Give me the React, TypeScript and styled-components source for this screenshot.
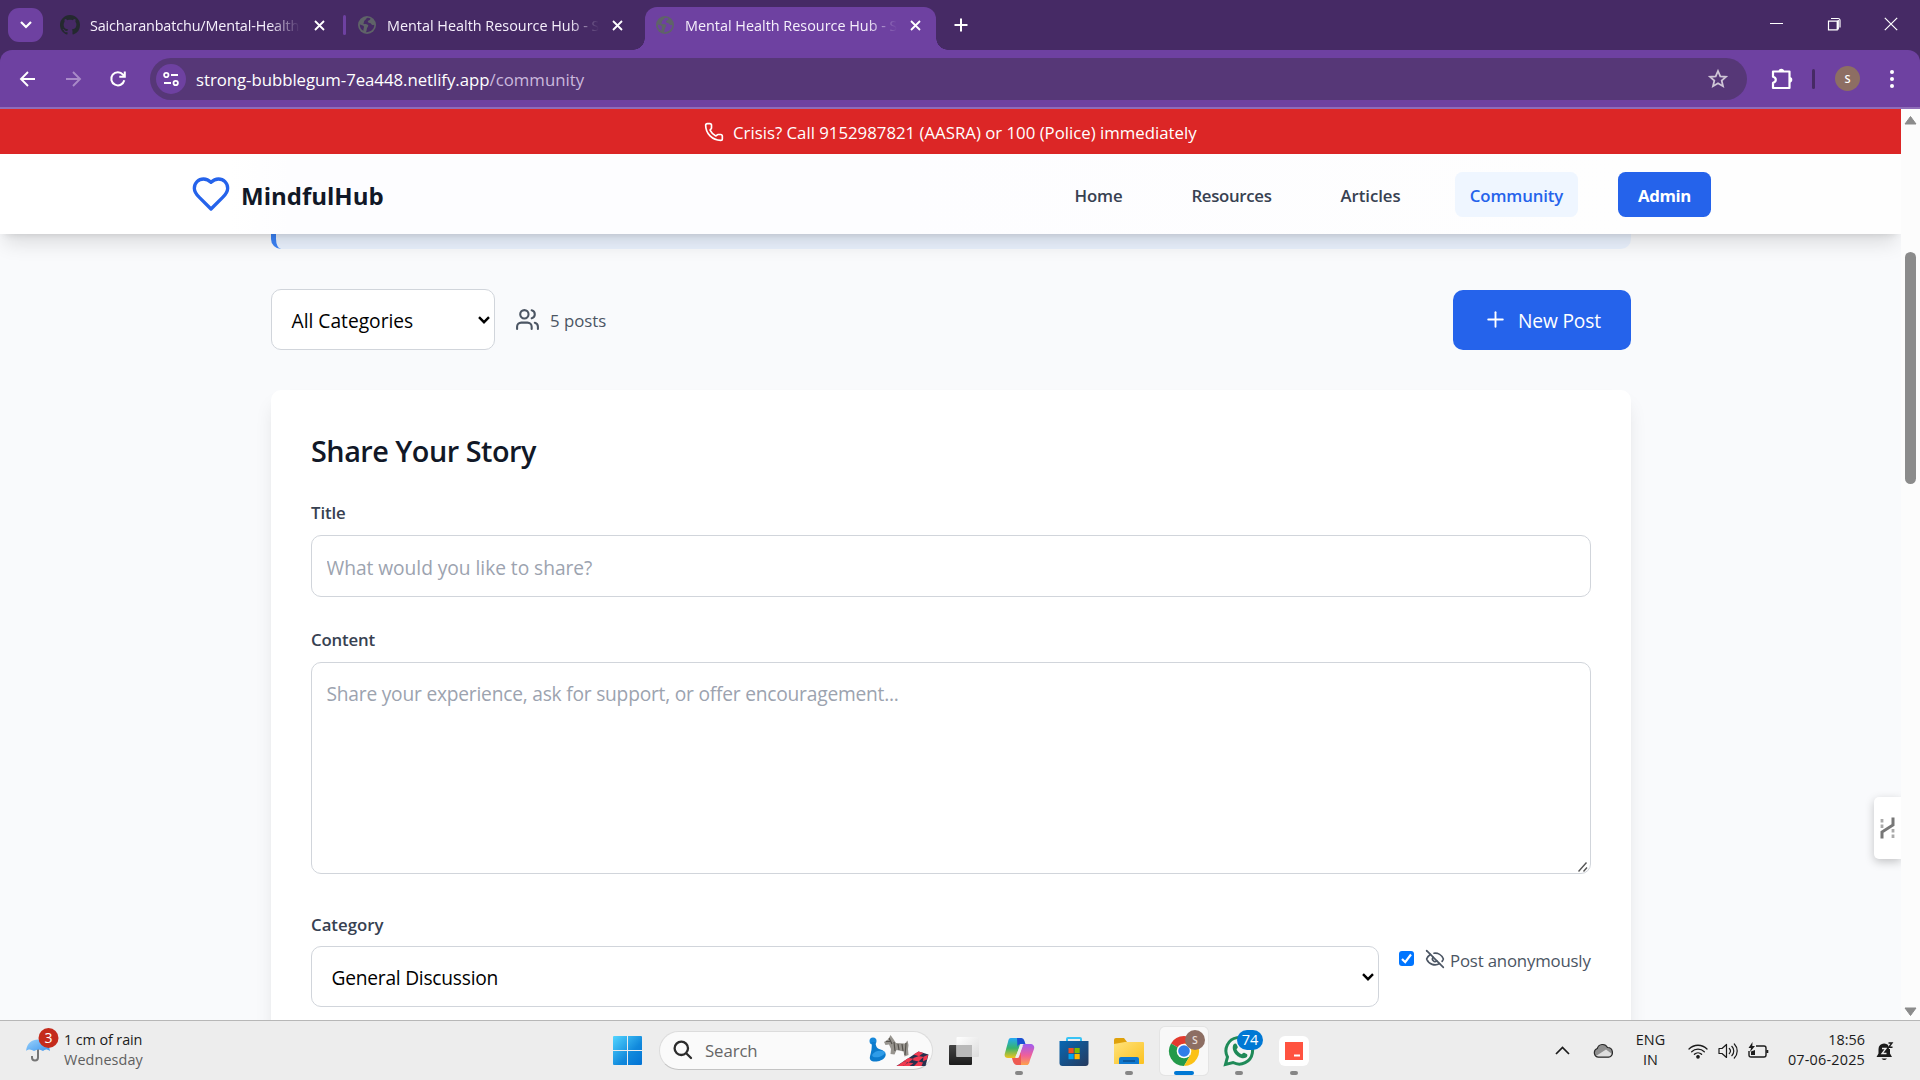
import React from 'react';
import styled, { createGlobalStyle } from 'styled-components';
import { EyeOff, Phone, Plus, Users } from 'lucide-react';

const GlobalStyle = createGlobalStyle`
  *, *::before, *::after { box-sizing: border-box; }
  html, body { margin: 0; overflow: hidden; }
  body { font-family: "Open Sans", "Noto Sans", sans-serif; background: #f9fafc; }
  svg { display: block; flex: none; }
  input, textarea, button { font-family: inherit; }
`;

const Screen = styled.div`
  width: 1920px;
  height: 1080px;
  display: flex;
  flex-direction: column;
  overflow: hidden;
`;

const Text = styled.span<{ $size: number; $ls?: number; $weight?: number; $color?: string; $drop?: number }>`
  display: block;
  flex: none;
  padding-top: ${(p) => p.$drop ?? 3.2}px;
  white-space: pre;
  line-height: 1.4;
  font-size: ${(p) => p.$size}px;
  letter-spacing: ${(p) => p.$ls ?? 0}px;
  font-weight: ${(p) => p.$weight ?? 400};
  color: ${(p) => p.$color ?? 'inherit'};
`;

/* ---------- browser chrome ---------- */

const TabStrip = styled.div`
  height: 50px;
  flex: none;
  display: flex;
  align-items: flex-start;
  padding: 0 0 0 8px;
  background: #462a65;
  color: #f5effb;
`;

const TabSearch = styled.button`
  width: 35px;
  height: 34px;
  margin: 8px 6px 0 0;
  padding: 0;
  border: 0;
  border-radius: 11px;
  background: #6e41a1;
  display: grid;
  place-items: center;
`;

const Tab = styled.div<{ $width: number; $left: number; $gap: number; $active?: boolean }>`
  position: relative;
  width: ${(p) => p.$width}px;
  height: ${(p) => (p.$active ? 43 : 50)}px;
  margin-top: ${(p) => (p.$active ? 7 : 0)}px;
  padding: ${(p) => (p.$active ? '0 0 7px' : '0')};
  padding-left: ${(p) => p.$left}px;
  display: flex;
  align-items: center;
  border-radius: 12px 12px 0 0;
  background: ${(p) => (p.$active ? '#6e41a1' : 'transparent')};

  > svg:first-child { margin-right: ${(p) => p.$gap}px; }

  &::before, &::after {
    content: '';
    display: ${(p) => (p.$active ? 'block' : 'none')};
    position: absolute;
    bottom: 0;
    width: 12px;
    height: 12px;
  }
  &::before { left: -12px; background: radial-gradient(circle at 0 0, transparent 11.5px, #6e41a1 12px); }
  &::after { right: -12px; background: radial-gradient(circle at 100% 0, transparent 11.5px, #6e41a1 12px); }
`;

const TabTitle = styled.div<{ $width: number }>`
  width: ${(p) => p.$width}px;
  overflow: hidden;
  mask-image: linear-gradient(90deg, #000 calc(100% - 30px), transparent);
`;

const TabClose = styled.div<{ $left: number }>`
  margin-left: ${(p) => p.$left}px;
`;

const TabDivider = styled.i`
  width: 3px;
  height: 20px;
  margin-top: 15px;
  border-radius: 2px;
  background: #6e41a1;
`;

const NewTab = styled.div`
  margin: 18px 0 0 18px;
`;

const WindowControls = styled.div`
  margin: 17px 22px 0 auto;
  display: flex;
  gap: 43px;
`;

const ToolbarBack = styled.div`
  background: #462a65;
  flex: none;
`;

const Toolbar = styled.div`
  height: 59px;
  border-bottom: 2px solid #8f6cb8;
  border-radius: 12px 12px 0 0;
  background: #6e41a1;
  display: flex;
  align-items: center;
  padding-left: 18px;
  color: #fff;
`;

const NavIcons = styled.div`
  display: flex;
  gap: 25px;
  width: 132px;
`;

const Omnibox = styled.div`
  width: 1597px;
  height: 42px;
  border-radius: 21px;
  background: #563777;
  display: flex;
  align-items: center;
  padding: 0 18px 0 6px;
`;

const SiteInfo = styled.div`
  width: 30px;
  height: 30px;
  margin-right: 10px;
  border-radius: 50%;
  background: #6e41a1;
  display: grid;
  place-items: center;
`;

const StarSlot = styled.div`
  margin-left: auto;
`;

const ToolbarEnd = styled.div`
  display: flex;
  align-items: center;
  padding-left: 22px;
`;

const ToolbarDivider = styled.i`
  width: 3px;
  height: 20px;
  margin: 0 20px 0 18px;
  border-radius: 2px;
  background: #462a65;
`;

const ProfileAvatar = styled.div`
  width: 25px;
  height: 25px;
  margin-right: 26px;
  border-radius: 50%;
  background: #8d6e63;
  display: grid;
  place-items: center;
  font: 600 11px "Open Sans", sans-serif;
`;

/* ---------- web page ---------- */

const Viewport = styled.div`
  height: 911px;
  flex: none;
  display: flex;
  overflow: hidden;
`;

const Page = styled.div`
  position: relative;
  width: 1901px;
  height: 911px;
  overflow: hidden;
  background: #f9fafc;
`;

const CrisisBanner = styled.div`
  height: 45px;
  background: #dc2626;
  color: #fff;
  display: flex;
  align-items: center;
  padding-left: 704px;
  gap: 9px;
`;

const Header = styled.header`
  position: relative;
  z-index: 2;
  height: 80px;
  padding: 0 190px 0 191px;
  background: linear-gradient(90deg, #fff 230px, #fdfdff 290px, #fdfdff 900px, #fefefe 1640px, #fefefe);
  box-shadow: 0 12.5px 18.75px -3.75px rgba(0, 0, 0, 0.12), 0 5px 7.5px -5px rgba(0, 0, 0, 0.12);
  display: flex;
  align-items: center;
  justify-content: space-between;
`;

const Brand = styled.div`
  display: flex;
  align-items: center;
  gap: 10px;
`;

const Nav = styled.nav`
  display: flex;
  gap: 40px;
`;

const NavItem = styled.a<{ $width: number; $variant?: 'active' | 'solid' }>`
  width: ${(p) => p.$width}px;
  height: 45px;
  border-radius: 7.5px;
  display: grid;
  place-items: center;
  color: ${(p) => (p.$variant === 'active' ? '#2563eb' : p.$variant === 'solid' ? '#fff' : '#374151')};
  background: ${(p) => (p.$variant === 'active' ? '#eff6ff' : p.$variant === 'solid' ? '#2563eb' : 'transparent')};
`;

const Content = styled.main`
  width: 1360px;
  margin-left: 271px;
`;

const GuidelinesEdge = styled.div`
  height: 15px;
  border-left: 5px solid #3b82f6;
  border-radius: 0 0 10px 10px;
  background: #eaf2fe;
`;

const FilterRow = styled.div`
  display: flex;
  align-items: center;
  justify-content: space-between;
  height: 61px;
  margin: 40px 0;
`;

const FilterGroup = styled.div`
  display: flex;
  align-items: center;
  gap: 20px;
`;

const SelectBox = styled.div<{ $width: number }>`
  width: ${(p) => p.$width}px;
  height: 61px;
  padding: 0 4px 0 19.5px;
  border: 1px solid #d1d5db;
  border-radius: 10px;
  background: #fff;
  color: #000;
  display: flex;
  align-items: center;
  justify-content: space-between;
`;

const PostCount = styled.div`
  display: flex;
  align-items: center;
  gap: 10px;
  color: #4b5563;
`;

const NewPost = styled.button`
  width: 178px;
  height: 60px;
  padding: 0 0 0 30px;
  border: 0;
  border-radius: 10px;
  background: #2563eb;
  color: #fff;
  display: flex;
  align-items: center;
  gap: 10px;
`;

const Card = styled.section`
  height: 700px;
  padding: 40px;
  border-radius: 10px;
  background: #fff;
  box-shadow: 0 12.5px 18.75px -3.75px rgba(0, 0, 0, 0.1), 0 5px 7.5px -5px rgba(0, 0, 0, 0.1);
`;

const CardTitle = styled.div`
  height: 40px;
  margin-bottom: 30px;
  display: flex;
  align-items: center;
  color: #111827;
`;

const Label = styled.div`
  height: 25px;
  margin-bottom: 10px;
  display: flex;
  align-items: center;
  color: #374151;
`;

const TitleInput = styled.input`
  display: block;
  width: 1280px;
  height: 62px;
  margin-bottom: 30px;
  padding: 2px 14.5px 0;
  border: 1px solid #d1d5db;
  border-radius: 10px;
  outline: 0;
  font-size: 19.2px;
  &::placeholder { color: #9ca3af; opacity: 1; letter-spacing: -0.04px; }
`;

const ContentField = styled.div`
  position: relative;
  height: 212px;
  margin-bottom: 37px;
`;

const ContentArea = styled.textarea`
  display: block;
  width: 1280px;
  height: 212px;
  padding: 15.5px 14.5px;
  border: 1px solid #d1d5db;
  border-radius: 10px;
  outline: 0;
  resize: none;
  font-size: 19.2px;
  line-height: 30px;
  &::placeholder { color: #9ca3af; opacity: 1; letter-spacing: -0.22px; }
`;

const ResizeGrip = styled.svg`
  position: absolute;
  right: 3px;
  bottom: 2px;
`;

const CategoryRow = styled.div`
  display: flex;
  justify-content: space-between;
  align-items: flex-start;
`;

const Anonymous = styled.div`
  width: 192px;
  height: 26px;
  margin-top: 35px;
  display: flex;
  align-items: center;
  color: #4b5563;
`;

const Check = styled.div`
  width: 15px;
  height: 15px;
  margin: -1px 11px 0 0;
  border-radius: 3px;
  background: #0075ff;
  display: grid;
  place-items: center;
`;

const AnonIcon = styled.div`
  margin: 0 5px 0 0;
`;

const SideWidget = styled.div`
  position: absolute;
  right: 0;
  top: 688px;
  width: 27px;
  height: 62px;
  border-radius: 5px 0 0 5px;
  background: #fff;
  box-shadow: 0 3px 10px rgba(0, 0, 0, 0.22);
  display: grid;
  place-items: center;
`;

const Scrollbar = styled.div`
  width: 19px;
  background: #fcfcfc;
  display: flex;
  flex-direction: column;
  align-items: center;
  padding: 6px 0 3px;
`;

const Thumb = styled.div`
  width: 11px;
  height: 232px;
  margin: 127px 0 auto;
  border-radius: 6px;
  background: #8b8b8b;
`;

/* ---------- taskbar ---------- */

const Taskbar = styled.div`
  height: 60px;
  flex: none;
  border-top: 1px solid #b7b7b7;
  background: #ededed;
  display: flex;
  align-items: center;
  color: #1b1b1b;
`;

const Weather = styled.div`
  width: 613px;
  height: 59px;
  padding-left: 25px;
  display: flex;
`;

const WeatherIcon = styled.div`
  width: 39px;
  padding-top: 5px;
`;

const TwoLine = styled.div<{ $align?: string }>`
  height: 59px;
  padding-top: 9px;
  display: flex;
  flex-direction: column;
  align-items: ${(p) => p.$align ?? 'flex-start'};
  > span { height: 20px; line-height: 20px; padding: 0; }
`;

const SearchPill = styled.div`
  width: 274px;
  height: 39px;
  margin: 0 7px 1px 17px;
  padding-left: 13px;
  border: 1px solid #dcdcdc;
  border-bottom-color: #c4c4c4;
  border-radius: 20px;
  background: #fafafa;
  display: flex;
  align-items: center;
`;

const SearchText = styled.div`
  width: 176px;
  padding-left: 12px;
`;

const AppTile = styled.div<{ $active?: boolean }>`
  width: 48px;
  height: 48px;
  margin-right: 7px;
  border-radius: 5px;
  background: ${(p) => (p.$active ? '#f8f8f8' : 'transparent')};
  box-shadow: ${(p) => (p.$active ? '0 0 0 1px #e4e4e4' : 'none')};
  display: flex;
  flex-direction: column;
  align-items: center;
  padding-top: 4px;
`;

const RunMark = styled.i<{ $active?: boolean }>`
  width: ${(p) => (p.$active ? 20 : 8)}px;
  height: 4px;
  border-radius: 2px;
  background: ${(p) => (p.$active ? '#0078d4' : '#868686')};
`;

const Tray = styled.div`
  margin-left: auto;
  width: 365px;
  height: 59px;
  display: flex;
  align-items: center;
`;

const TraySlot = styled.div<{ $width: number; $after?: number }>`
  width: ${(p) => p.$width}px;
  margin-right: ${(p) => p.$after ?? 0}px;
  flex: none;
`;

/* ---------- drawings ---------- */

const Stroke = ({ w, h, d, s = 2, c = '#fff', box, round }: { w: number; h: number; d: string; s?: number; c?: string; box?: string; round?: boolean }) => (
  <svg width={w} height={h} viewBox={box ?? `0 0 ${w} ${h}`} fill="none" stroke={c} strokeWidth={s} strokeLinecap={round ? 'round' : 'butt'} strokeLinejoin={round ? 'round' : 'miter'}>
    <path d={d} />
  </svg>
);

const GithubMark = () => (
  <svg width="20" height="20" viewBox="0 0 16 16" fill="#24292f">
    <path d="M8 0C3.58 0 0 3.58 0 8c0 3.54 2.29 6.53 5.47 7.59.4.07.55-.17.55-.38 0-.19-.01-.82-.01-1.49-2.01.37-2.53-.49-2.69-.94-.09-.23-.48-.94-.82-1.13-.28-.15-.68-.52-.01-.53.63-.01 1.08.58 1.23.82.72 1.21 1.87.87 2.33.66.07-.52.28-.87.51-1.07-1.78-.2-3.64-.89-3.64-3.95 0-.87.31-1.59.82-2.15-.08-.2-.36-1.02.08-2.12 0 0 .67-.21 2.2.82.64-.18 1.32-.27 2-.27s1.36.09 2 .27c1.53-1.04 2.2-.82 2.2-.82.44 1.1.16 1.92.08 2.12.51.56.82 1.27.82 2.15 0 3.07-1.87 3.75-3.65 3.95.29.25.54.73.54 1.48 0 1.07-.01 1.93-.01 2.2 0 .21.15.46.55.38A8.01 8.01 0 0 0 16 8c0-4.42-3.58-8-8-8z" />
  </svg>
);

const GlobeMark = ({ bg }: { bg: string }) => (
  <svg width="18" height="18" viewBox="0 0 18 18">
    <circle cx="9" cy="9" r="9" fill="#5f6368" />
    <path d="M9.500 1.800C8 2.200 8.200 4 6.600 4.400 5.600 4.900 6.500 6.600 5.200 7.200 6.500 8.800 9.300 7.500 10.200 9.200 10.800 10.500 9 11.100 8.900 12.600 8.700 14 8.500 15 8 16.200 13 16.200 16.400 13 16.300 8.800 14.800 9.500 13.800 8.800 13 7.800 12 6.600 9.600 7.200 9.800 5.600 10 4.400 12.300 4.600 12.500 2.600 11.600 2 10.500 1.700 9.500 1.800Z" fill={bg} />
    <path d="M1.800 8.500C3 9 5 9.300 5.800 10.200 6.500 11.300 5.200 12.200 5.400 14.800 3 13.500 1.700 11.300 1.800 8.500Z" fill={bg} />
  </svg>
);

const CloseMark = () => <Stroke w={11} h={11} s={1.8} d="M1 1l9 9M10 1l-9 9" />;

const Caret = () => <Stroke w={12} h={8} s={2.4} c="#000" d="M1 1.200l5 5 5-5" />;

const HeartMark = () => (
  <Stroke w={40} h={40} box="0 0 24 24" c="#2563eb" round
    d="M19 14c1.49-1.46 3-3.21 3-5.5A5.5 5.5 0 0 0 16.5 3c-1.76 0-3 .5-4.5 2-1.5-1.5-2.74-2-4.5-2A5.5 5.5 0 0 0 2 8.5c0 2.3 1.5 4.05 3 5.5l7 7Z" />
);

const Umbrella = () => (
  <svg width="36" height="42" viewBox="0 0 36 42">
    <defs><linearGradient id="um" x1="0" y1="0" x2="1" y2="1"><stop offset="0" stopColor="#9bd2fb" /><stop offset="1" stopColor="#3f97ee" /></linearGradient></defs>
    <path d="M13 20V31.500a3 3 0 0 1-6 0V30" fill="none" stroke="#757575" strokeWidth="2" />
    <path d="M1 25C2 17 7 13.500 13 13.500S24 17 25 25C22 23 20 23 18 25 15 23 12 23 9 25 6 23 3 23 1 25Z" fill="url(#um)" />
    <circle cx="23.500" cy="12" r="10" fill="#c42b1c" />
    <text x="23.500" y="17" textAnchor="middle" fontFamily="Open Sans" fontSize="14" fill="#fff">3</text>
  </svg>
);

const WindowsLogo = () => (
  <svg width="29" height="29" viewBox="0 0 29 29">
    <defs><linearGradient id="wl" x1="0" y1="0" x2="29" y2="29" gradientUnits="userSpaceOnUse"><stop stopColor="#53d5ff" /><stop offset=".6" stopColor="#1189dc" /><stop offset="1" stopColor="#0272d4" /></linearGradient></defs>
    <path d="M1 0h13v14H0V1q0-1 1-1zM15 0h13q1 0 1 1v13H15zM0 15h14v14H1q-1 0-1-1zM15 15h14v13q0 1-1 1H15z" fill="url(#wl)" />
  </svg>
);

const BoardGame = () => (
  <svg width="60" height="34" viewBox="0 0 60 34">
    <circle cx="4" cy="8" r="3.500" fill="#1687d9" />
    <path d="M2.500 9h4c.3 4 1 6.500 5 7.500 4 1 6.500 4 4.500 7.500-2.500 4.500-12 6-14.500 3-2.500-3 2.500-8 1-18z" fill="#0c7bcd" />
    <ellipse cx="9.500" cy="21" rx="6.500" ry="3" fill="#2f9ce8" transform="rotate(-15 9.500 21)" />
    <path d="M15 9l4.500-3L21.500 2l2.500 3.500 3 4.500 9 .5 2.500-3 1 4.500-.5 4 .5 6-4 1.500-1-5-7-1.500-2 4.500-4-.5 .5-5-2-4.500-3.500.5z" fill="#97948e" />
    <path d="M20 5l3 6M25 9l1 9M29 11l1 6M33 11l1 7M37 10l-1 12M17 8.500h4" stroke="#55524d" strokeWidth="1.200" />
    <path d="M49.500 18.500L59.500 21.500 56.500 33H27.500z" fill="#27304e" />
    <path d="M49.500 18.500l4.800 1.500-4.300 3.200-5.500-1.700zM54.500 23.800l4.500-2-1 4.700-4 1.700zM44.500 25l5.500-2 4.500 1-5 4.500-5.500-1.200zM39.500 25l5 .8-5 3.700-5-1.200zM49.500 28.500l4.500 1-1.500 3.500h-7.500zM39.500 29.500l5 .8-4 2.700h-6.500zM34.500 28.500l-5 3.500-2 1h7l4-3.500z" fill="#f23a50" />
  </svg>
);

const TaskView = () => (
  <svg width="32" height="40" viewBox="0 0 32 40">
    <defs>
      <linearGradient id="tv" x1="0" y1="0" x2="0" y2="1"><stop stopColor="#444" /><stop offset="1" stopColor="#1c1c1c" /></linearGradient>
      <linearGradient id="tw" x1="0" y1="0" x2="1" y2="1"><stop stopColor="#fff" /><stop offset="1" stopColor="#dcdcdc" /></linearGradient>
    </defs>
    <rect x="1" y="14" width="23" height="20" rx="1" fill="url(#tv)" />
    <rect x="8.500" y="6" width="22.500" height="20" rx="1" fill="url(#tw)" />
    <path d="M8.500 14H24V26H8.500z" fill="#b9b9b9" />
  </svg>
);

const Copilot = () => (
  <svg width="32" height="40" viewBox="0 0 32 40">
    <defs>
      <linearGradient id="cp1" x1="0" y1="0" x2="0" y2="1"><stop stopColor="#24a9f5" /><stop offset=".5" stopColor="#37b46c" /><stop offset="1" stopColor="#f5c51c" /></linearGradient>
      <linearGradient id="cp2" x1="0" y1="0" x2="0" y2="1"><stop stopColor="#a05cf0" /><stop offset=".55" stopColor="#f0609a" /><stop offset="1" stopColor="#fda24a" /></linearGradient>
    </defs>
    <path d="M8 7h11L13 26c-1 2-1 1-4 1H5c-3 0-4-2-3-5l3-11c.6-2.500 1-4 3-4z" fill="url(#cp1)" />
    <path d="M14 7h4c3 0 3.500 3 4.500 6H18c-2 0-3 1-3.500 3z" fill="#1a4fd2" />
    <path d="M24 34H13l6-18c1-3 1-3 4-3h4c3 0 5 2 4 5l-4 11c-.6 2.500-1 5-3 5z" fill="url(#cp2)" />
    <path d="M18 34h-4c-3 0-4-3-5-7h5c3 0 3-3 4-6z" fill="#ee5a52" />
    <path d="M17.500 14.500h2.500l-4.500 12h-3.500z" fill="#ededed" />
  </svg>
);

const Store = () => (
  <svg width="32" height="40" viewBox="0 0 32 40">
    <defs><linearGradient id="st" x1="0" y1="0" x2="1" y2="1"><stop stopColor="#0668b4" /><stop offset="1" stopColor="#263a5e" /></linearGradient></defs>
    <path d="M9 12V8q0-1 1-1h12q1 0 1 1v4" fill="none" stroke="#38c3f5" strokeWidth="2" />
    <path d="M1.500 10h29v22q0 3-3 3h-23q-3 0-3-3z" fill="url(#st)" />
    <path d="M10.500 17h5.200v5.200h-5.200z" fill="#f25022" /><path d="M16.500 17h5.200v5.200h-5.200z" fill="#7fba00" />
    <path d="M10.500 23h5.200v5.200h-5.200z" fill="#00a4ef" /><path d="M16.500 23h5.200v5.200h-5.200z" fill="#ffb900" />
  </svg>
);

const Explorer = () => (
  <svg width="32" height="40" viewBox="0 0 32 40">
    <defs><linearGradient id="ex" x1="0" y1="0" x2="1" y2="1"><stop stopColor="#ffe27a" /><stop offset="1" stopColor="#fbc11f" /></linearGradient></defs>
    <path d="M1 9q0-2 2-2h8l3 4v3H1z" fill="#dfa10b" />
    <path d="M1 13l11-2h18q1 0 1 1v20q0 1-1 1H1z" fill="url(#ex)" />
    <path d="M6 33v-5q0-2 2-2h16q2 0 2 2v5z" fill="#0e78cf" />
    <path d="M10 30h12" stroke="#0a4f91" strokeWidth="1.500" />
  </svg>
);

const Chrome = () => (
  <svg width="40" height="40" viewBox="0 0 40 40" overflow="visible">
    <path d="M20 20L7 12.500A15 15 0 0 1 33 12.500z" fill="#e33b2e" />
    <path d="M20 20L7 12.500A15 15 0 0 0 20 35L26.500 24z" fill="#249a4a" />
    <path d="M20 35A15 15 0 0 0 33 12.500H20l6.500 11.200z" fill="#fbc116" />
    <circle cx="20" cy="20" r="7.300" fill="#fff" /><circle cx="20" cy="20" r="5.800" fill="#2f7de9" />
    <circle cx="31" cy="9" r="10" fill="#8d6e63" />
    <text x="31" y="12.800" textAnchor="middle" fontFamily="Open Sans" fontWeight="600" fontSize="10.500" fill="#e6dcd8">S</text>
  </svg>
);

const WhatsApp = () => (
  <svg width="32" height="40" viewBox="0 0 32 40" overflow="visible">
    <path d="M2.500 33.500l2-7.500A13.300 13.300 0 1 1 10 31.500z" fill="#f4f4f4" stroke="#1f8a58" strokeWidth="3" />
    <path d="M10.500 13.500c1-1.500 2.500-1.500 3.200 0l1 2.300c.3.800-.3 1.600-1.200 2.500 1.200 2.500 2.800 4 5.200 5 1-1 1.700-1.900 2.500-1.500l2.500 1.200c1.300.8.700 2.500-.5 3.500C16.500 30 7 20 10.500 13.500z" fill="#1f8a58" />
    <rect x="14" y="-1" width="26" height="20" rx="10" fill="#0078d4" />
    <text x="27" y="14.300" textAnchor="middle" fontFamily="Open Sans" fontSize="14.500" fill="#fff">74</text>
  </svg>
);

const RedApp = () => (
  <svg width="32" height="40" viewBox="0 0 32 40">
    <rect x="1" y="5" width="30" height="30" rx="6" fill="#fff" />
    <path d="M7 11h18v18H7z" fill="#ff5340" /><path d="M16 24.500h6" stroke="#fff" strokeWidth="2" />
  </svg>
);

const Cloud = () => (
  <svg width="20" height="16" viewBox="0 0 20 16">
    <path d="M5.500 14.200A4.500 4.500 0 0 1 4.300 5.500 5.500 5.500 0 0 1 14.500 4.500 4.900 4.900 0 0 1 15.500 14.200z" fill="#8f8f8f" />
    <path d="M3 13l10-6.500 6 4.500-2 3H5z" fill="#dedede" />
    <path d="M5.500 14.200A4.500 4.500 0 0 1 4.300 5.500 5.500 5.500 0 0 1 14.500 4.500 4.900 4.900 0 0 1 15.500 14.200z" fill="none" stroke="#2a2a2a" strokeWidth="1.200" />
  </svg>
);

const Wifi = () => (
  <svg width="20" height="16" viewBox="0 0 20 16" fill="none" stroke="#1b1b1b" strokeWidth="1.300" strokeLinecap="round">
    <path d="M1 6a12.700 12.700 0 0 1 18 0M3.700 8.700a9 9 0 0 1 12.600 0M6.400 11.300a5.200 5.200 0 0 1 7.200 0" />
    <circle cx="10" cy="13.800" r="1.200" fill="#1b1b1b" />
  </svg>
);

const Speaker = () => (
  <svg width="20" height="18" viewBox="0 0 20 18" fill="none" stroke="#1b1b1b" strokeWidth="1.200" strokeLinejoin="round" strokeLinecap="round">
    <path d="M1 6.500h3L8.500 2.500v13L4 11.500H1zM11.300 6.500a3.600 3.600 0 0 1 0 5M13.800 4.300a6.600 6.600 0 0 1 0 9.400M16.300 2a9.900 9.900 0 0 1 0 14" />
  </svg>
);

const Battery = () => (
  <svg width="21" height="18" viewBox="0 0 21 18" fill="none" stroke="#1b1b1b" strokeWidth="1.400">
    <path d="M8 4h8q2 0 2 2v7q0 2-2 2H3q-2 0-2-2V9" /><path d="M19.300 8v3" strokeWidth="2" />
    <path d="M3 13V9.500l4-1.500V13z" fill="#1b1b1b" stroke="none" />
    <path d="M4.500 0L.5 6H3L2 10 7 4H4.300z" fill="#1b1b1b" stroke="none" />
  </svg>
);

const Bell = () => (
  <svg width="19" height="20" viewBox="0 0 19 20">
    <path d="M8 2.500a5.800 5.800 0 0 1 6 5.500v4.500l2 3.500H.500l2-3.500V8A5.500 5.500 0 0 1 8 2.500z" fill="#1b1b1b" />
    <path d="M5.500 17.500h5.500q-2.700 3-5.500 0z" fill="#1b1b1b" />
    <path d="M6 7.500h4l-4 5h4.500" fill="none" stroke="#ededed" strokeWidth="1.300" />
    <path d="M11.500 1H17v7h-4z" fill="#ededed" />
    <path d="M12.500 2h3.500l-3.300 4.300H16.500" fill="none" stroke="#1b1b1b" strokeWidth="1.400" />
  </svg>
);

/* ---------- sections ---------- */

const BrowserTab = ({ title, icon, width, left, gap, titleWidth, closeLeft, active, ls }: {
  title: string; icon: React.ReactNode; width: number; left: number; gap: number; titleWidth: number; closeLeft: number; active?: boolean; ls: number;
}) => (
  <Tab $width={width} $left={left} $gap={gap} $active={active}>
    {icon}
    <TabTitle $width={titleWidth}><Text $size={14.4} $ls={ls} $drop={1.5}>{title}</Text></TabTitle>
    <TabClose $left={closeLeft}><CloseMark /></TabClose>
  </Tab>
);

const BrowserChrome = () => (
  <>
    <TabStrip>
      <TabSearch><Stroke w={12} h={8} s={2.2} d="M1 1l5 5 5-5" /></TabSearch>
      <BrowserTab title="Saicharanbatchu/Mental-Health" icon={<GithubMark />} width={294} left={11} gap={10} titleWidth={210} closeLeft={14} ls={-0.14} />
      <TabDivider />
      <BrowserTab title="Mental Health Resource Hub - S" icon={<GlobeMark bg="#462a65" />} width={299} left={12} gap={11} titleWidth={212} closeLeft={13} ls={0} />
      <BrowserTab title="Mental Health Resource Hub - S" icon={<GlobeMark bg="#6e41a1" />} width={291} left={11} gap={11} titleWidth={212} closeLeft={13} active ls={0} />
      <NewTab><Stroke w={14} h={14} d="M7 .5v13M.5 7h13" /></NewTab>
      <WindowControls>
        <Stroke w={14} h={14} s={1} d="M0 6.500h13" />
        <Stroke w={14} h={14} s={1.200} d="M1.500 4.200h8.700v8.700H1.500zM4 1.500h7q2 0 2 2v7M11.300 3v9.500" />
        <Stroke w={14} h={14} s={1.200} d="M.8.8l12.400 12.400M13.200.8L.8 13.200" />
      </WindowControls>
    </TabStrip>
    <ToolbarBack>
      <Toolbar>
        <NavIcons>
          <Stroke w={20} h={20} s={1.900} d="M17 10H3.500M10 3l-7 7 7 7" />
          <Stroke w={20} h={20} s={1.900} c="#a98ac8" d="M3 10h13.500M10 3l7 7-7 7" />
          <Stroke w={20} h={20} s={2} d="M16.300 11.300A6.600 6.600 0 1 1 15 5.600L16.500 7.500M16.800 2.500v5.300h-5.500" />
        </NavIcons>
        <Omnibox>
          <SiteInfo>
            <Stroke w={18} h={18} s={1.800} d="M6.500 5A2.200 2.200 0 1 1 2.100 5 2.200 2.200 0 0 1 6.500 5zM9 5h7M15.900 13A2.200 2.200 0 1 1 11.500 13 2.200 2.200 0 0 1 15.900 13zM2 13h7" />
          </SiteInfo>
          <Text $size={16.8} $ls={-0.04} $color="#fff">strong-bubblegum-7ea448.netlify.app</Text>
          <Text $size={16.8} $ls={0.02} $color="#cbb9dd">/community</Text>
          <StarSlot><Stroke w={22} h={22} box="0 0 22 22" s={1.800} c="#cfc6d6" d="M11 3l2.300 5.300 5.700.5-4.300 3.800 1.300 5.600-5-3-5 3 1.300-5.600L3 8.800l5.700-.5z" /></StarSlot>
        </Omnibox>
        <ToolbarEnd>
          <svg width="25" height="24" viewBox="0 0 25 24">
            <path d="M4 4.500h16.500v16.500H4v-5.200c3.700-1 3.700-5.100 0-6z" fill="none" stroke="#fff" strokeWidth="2.200" strokeLinejoin="round" />
            <path d="M9.500 4.500a2.800 2.800 0 0 1 5.600 0zM20.500 10a2.800 2.800 0 0 1 0 5.600z" fill="#fff" />
          </svg>
          <ToolbarDivider />
          <ProfileAvatar>S</ProfileAvatar>
          <svg width="8" height="20" viewBox="0 0 8 20" fill="#fff"><circle cx="6" cy="3" r="2" /><circle cx="6" cy="10" r="2" /><circle cx="6" cy="17" r="2" /></svg>
        </ToolbarEnd>
      </Toolbar>
    </ToolbarBack>
  </>
);

const SiteHeader = () => (
  <>
    <CrisisBanner>
      <Phone size={20} />
      <Text $size={16.8}>Crisis? Call 9152987821 (AASRA) or 100 (Police) immediately</Text>
    </CrisisBanner>
    <Header>
      <Brand>
        <HeartMark />
        <Text $size={24} $weight={700} $color="#111827">MindfulHub</Text>
      </Brand>
      <Nav>
        <NavItem $width={77}><Text $size={16.8} $weight={600} $ls={-0.1}>Home</Text></NavItem>
        <NavItem $width={109}><Text $size={16.8} $weight={600} $ls={-0.3}>Resources</Text></NavItem>
        <NavItem $width={89}><Text $size={16.8} $weight={600} $ls={-0.05}>Articles</Text></NavItem>
        <NavItem $width={123} $variant="active"><Text $size={16.8} $weight={600} $ls={-0.12}>Community</Text></NavItem>
        <NavItem $width={93} $variant="solid"><Text $size={16.8} $weight={700} $ls={-0.4}>Admin</Text></NavItem>
      </Nav>
    </Header>
  </>
);

const PostForm = () => (
  <Card>
    <CardTitle><Text $size={28.8} $weight={600} $ls={-0.5} $drop={1.5}>Share Your Story</Text></CardTitle>
    <Label><Text $size={16.8} $weight={600} $ls={-0.1} $drop={0.5}>Title</Text></Label>
    <TitleInput placeholder="What would you like to share?" />
    <Label><Text $size={16.8} $weight={600} $ls={-0.15} $drop={0.5}>Content</Text></Label>
    <ContentField>
      <ContentArea placeholder="Share your experience, ask for support, or offer encouragement..." />
      <ResizeGrip width="10" height="10" viewBox="0 0 10 10" fill="none" stroke="#555" strokeWidth="1.400"><path d="M.5 9.500L8.500 .5M5.500 9.500L9 5.500" /></ResizeGrip>
    </ContentField>
    <CategoryRow>
      <div>
        <Label><Text $size={16.8} $weight={600} $drop={1.5}>Category</Text></Label>
        <SelectBox $width={1068}><Text $size={19.2} $ls={-0.24} $drop={3.5}>General Discussion</Text><Caret /></SelectBox>
      </div>
      <Anonymous>
        <Check><Stroke w={15} h={15} s={2.200} d="M3 8l3.200 3.200L12 3.500" /></Check>
        <AnonIcon><EyeOff size={20} /></AnonIcon>
        <Text $size={16.8} $ls={-0.18} $drop={3.5}>Post anonymously</Text>
      </Anonymous>
    </CategoryRow>
  </Card>
);

const WindowsTaskbar = () => (
  <Taskbar>
    <Weather>
      <WeatherIcon><Umbrella /></WeatherIcon>
      <TwoLine><Text $size={14.4} $ls={-0.1}>1 cm of rain</Text><Text $size={14.4} $ls={0.1} $color="#5f5f5f">Wednesday</Text></TwoLine>
    </Weather>
    <WindowsLogo />
    <SearchPill>
      <Stroke w={20} h={20} s={2.300} c="#2b2b2b" round d="M15 8.300A6.700 6.700 0 1 1 1.600 8.300 6.700 6.700 0 0 1 15 8.300zM13.200 13.200L18 18" />
      <SearchText><Text $size={16.8} $ls={-0.1} $color="#666" $drop={1.5}>Search</Text></SearchText>
      <BoardGame />
    </SearchPill>
    <AppTile><TaskView /></AppTile>
    <AppTile><Copilot /><RunMark /></AppTile>
    <AppTile><Store /></AppTile>
    <AppTile><Explorer /><RunMark /></AppTile>
    <AppTile $active><Chrome /><RunMark $active /></AppTile>
    <AppTile><WhatsApp /><RunMark /></AppTile>
    <AppTile><RedApp /><RunMark /></AppTile>
    <Tray>
      <TraySlot $width={38}><Stroke w={15} h={9} s={1.700} c="#1b1b1b" d="M1 8l6.500-6.500L14 8" /></TraySlot>
      <TraySlot $width={34}><Cloud /></TraySlot>
      <TraySlot $width={47} $after={14}><TwoLine $align="center"><Text $size={14.4}>ENG</Text><Text $size={14.4}>IN</Text></TwoLine></TraySlot>
      <TraySlot $width={30}><Wifi /></TraySlot>
      <TraySlot $width={30}><Speaker /></TraySlot>
      <TraySlot $width={30}><Battery /></TraySlot>
      <TraySlot $width={87} $after={11}><TwoLine $align="flex-end"><Text $size={14.4}>18:56</Text><Text $size={14.4} $ls={0.2}>07-06-2025</Text></TwoLine></TraySlot>
      <TraySlot $width={20}><Bell /></TraySlot>
    </Tray>
  </Taskbar>
);

export default function App() {
  return (
    <Screen>
      <GlobalStyle />
      <BrowserChrome />
      <Viewport>
        <Page>
          <SiteHeader />
          <Content>
            <GuidelinesEdge />
            <FilterRow>
              <FilterGroup>
                <SelectBox $width={224}><Text $size={19.2} $drop={3.5}>All Categories</Text><Caret /></SelectBox>
                <PostCount><Users size={25} /><Text $size={16.8}>5 posts</Text></PostCount>
              </FilterGroup>
              <NewPost><Plus size={25} strokeWidth={1.800} /><Text $size={19.2} $ls={-0.15} $drop={3.5}>New Post</Text></NewPost>
            </FilterRow>
            <PostForm />
          </Content>
          <SideWidget>
            <svg width="15" height="22" viewBox="0 0 15 22" fill="none">
              <path d="M2 21.500V15L13 8V.5" stroke="#777" strokeWidth="3" />
              <path d="M2 2v10M13 12v10" stroke="#aaa" strokeWidth="2.800" strokeDasharray="3.500 2" />
            </svg>
          </SideWidget>
        </Page>
        <Scrollbar>
          <svg width="13" height="10" viewBox="0 0 13 10"><path d="M6.500 1.500L12 9H1z" fill="#8b8b8b" stroke="#8b8b8b" strokeLinejoin="round" /></svg>
          <Thumb />
          <svg width="13" height="10" viewBox="0 0 13 10"><path d="M6.500 8.500L12 1H1z" fill="#8b8b8b" stroke="#8b8b8b" strokeLinejoin="round" /></svg>
        </Scrollbar>
      </Viewport>
      <WindowsTaskbar />
    </Screen>
  );
}
